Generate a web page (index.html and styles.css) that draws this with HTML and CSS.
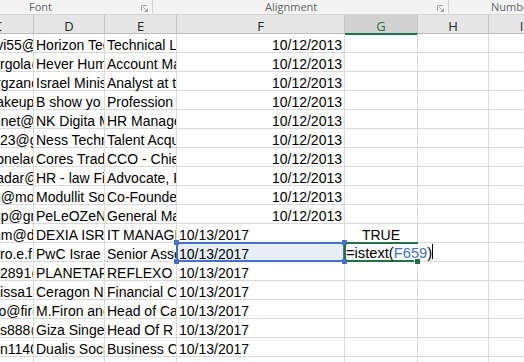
FILE: index.html
```html
<!DOCTYPE html>
<html>
<head>
<meta charset="utf-8">
<link rel="stylesheet" href="styles.css">
</head>
<body>
<div class="ribbon">
  <div class="group group-font">
    <span class="label">Font</span>
    <svg class="launcher" viewBox="0 0 7 7" width="7" height="7"><path d="M0.5 6V0.5H6" fill="none" stroke="#a6a6a6"/><path d="M2 2L5.5 5.5" stroke="#a6a6a6"/><path d="M7 3V7H3Z" fill="#a6a6a6"/></svg>
  </div>
  <div class="group group-align">
    <span class="label">Alignment</span>
    <svg class="launcher" viewBox="0 0 7 7" width="7" height="7"><path d="M0.5 6V0.5H6" fill="none" stroke="#a6a6a6"/><path d="M2 2L5.5 5.5" stroke="#a6a6a6"/><path d="M7 3V7H3Z" fill="#a6a6a6"/></svg>
  </div>
  <div class="group group-num">
    <span class="label">Number</span>
  </div>
</div>
<div class="sheet">
  <div class="hd">C</div><div class="hd">D</div><div class="hd">E</div><div class="hd">F</div><div class="hd sel">G</div><div class="hd">H</div><div class="hd">I</div>

  <div class="c">danavi55@gmail.com</div><div class="c">Horizon Technologies</div><div class="c">Technical Lead</div><div class="c r">10/12/2013</div><div class="c"></div><div class="c"></div><div class="c"></div>
  <div class="c">noamrgola@gmail.com</div><div class="c">Hever Human Resources</div><div class="c">Account Manager</div><div class="c r">10/12/2013</div><div class="c"></div><div class="c"></div><div class="c"></div>
  <div class="c">tomergzand@gmail.com</div><div class="c">Israel Ministry of Defense</div><div class="c">Analyst at the</div><div class="c r">10/12/2013</div><div class="c"></div><div class="c"></div><div class="c"></div>
  <div class="c">danaakeup@gmail.com</div><div class="c">B show yo Ltd</div><div class="c">Profession services</div><div class="c r">10/12/2013</div><div class="c"></div><div class="c"></div><div class="c"></div>
  <div class="c">ronennet@gmail.com</div><div class="c">NK Digita Media</div><div class="c">HR Manager</div><div class="c r">10/12/2013</div><div class="c"></div><div class="c"></div><div class="c"></div>
  <div class="c">amir123@gmail.com</div><div class="c">Ness Technologies</div><div class="c">Talent Acquisition</div><div class="c r">10/12/2013</div><div class="c"></div><div class="c"></div><div class="c"></div>
  <div class="c">danaonelac@gmail.com</div><div class="c">Cores Trading</div><div class="c">CCO - Chief</div><div class="c r">10/12/2013</div><div class="c"></div><div class="c"></div><div class="c"></div>
  <div class="c">danaadar@gmail.com</div><div class="c">HR - law Firm</div><div class="c">Advocate, Partner</div><div class="c r">10/12/2013</div><div class="c"></div><div class="c"></div><div class="c"></div>
  <div class="c">ronen@mor.co.il</div><div class="c">Modullit Software</div><div class="c">Co-Founder</div><div class="c r">10/12/2013</div><div class="c"></div><div class="c"></div><div class="c"></div>
  <div class="c">ronenp@gmail.com</div><div class="c">PeLeOZeN</div><div class="c">General Manager</div><div class="c r">10/12/2013</div><div class="c"></div><div class="c"></div><div class="c"></div>
  <div class="c">ronenm@dexia.com</div><div class="c">DEXIA ISRAEL</div><div class="c">IT MANAGER</div><div class="c">10/13/2017</div><div class="c m">TRUE</div><div class="c"></div><div class="c"></div>
  <div class="c">adamro.e.f@pwc.com</div><div class="c">PwC Israe</div><div class="c">Senior Associate</div>
  <div class="c open ref">10/13/2017<span class="ref-box"><i class="hdl tl"></i><i class="hdl tr"></i><i class="hdl bl"></i><i class="hdl br"></i></span></div>
  <div class="c open edit"><span class="edit-box"><i class="fill"></i></span><span class="editor">=istext(<span class="refname">F659</span>)<i class="caret"></i></span></div>
  <div class="c"></div><div class="c"></div>
  <div class="c">noam2891@gmail.com</div><div class="c">PLANETARIUM</div><div class="c">REFLEXO THERAPY</div><div class="c">10/13/2017</div><div class="c"></div><div class="c"></div><div class="c"></div>
  <div class="c">noamissa1@gmail.com</div><div class="c">Ceragon Networks</div><div class="c">Financial Controller</div><div class="c">10/13/2017</div><div class="c"></div><div class="c"></div><div class="c"></div>
  <div class="c">davido@firon.co.il</div><div class="c">M.Firon and Co</div><div class="c">Head of Career</div><div class="c">10/13/2017</div><div class="c"></div><div class="c"></div><div class="c"></div>
  <div class="c">noams888@gmail.com</div><div class="c">Giza Singer Even</div><div class="c">Head Of R Dept</div><div class="c">10/13/2017</div><div class="c"></div><div class="c"></div><div class="c"></div>
  <div class="c">noamn1140@gmail.com</div><div class="c">Dualis Social</div><div class="c">Business Consultant</div><div class="c">10/13/2017</div><div class="c"></div><div class="c"></div><div class="c"></div>
  <div class="c"></div><div class="c"></div><div class="c"></div><div class="c"></div><div class="c"></div><div class="c"></div><div class="c"></div>
</div>
</body>
</html>
```

FILE: styles.css
```css
html, body {
  margin: 0;
  padding: 0;
  background: #ffffff;
}
body {
  width: 524px;
  height: 362px;
  overflow: hidden;
  font-family: "Liberation Sans", Arial, sans-serif;
}

/* ribbon group labels */
.ribbon {
  display: flex;
  height: 15px;
  box-sizing: border-box;
  background: #f3f3f3;
  border-bottom: 1px solid #d6d6d6;
}
.group {
  display: flex;
  align-items: flex-end;
  height: 13px;
  box-sizing: border-box;
  border-right: 1px solid #d4d4d4;
}
.group-font { width: 153px; flex: none; padding-left: 29px; }
.group-align { width: 296px; flex: none; padding-left: 112px; }
.group-num { padding-left: 42px; border-right: 0; white-space: nowrap; }
.label {
  font-family: "Open Sans", "Noto Sans", sans-serif;
  font-size: 11px;
  line-height: 12px;
  color: #666666;
  white-space: nowrap;
}
.launcher {
  display: block;
  margin-left: auto;
  margin-right: 4px;
  align-self: flex-start;
  margin-top: 5px;
}

/* sheet grid */
.sheet {
  display: grid;
  grid-template-columns: 71px 71px 72px 168px 73px 71px 66px;
  grid-template-rows: 19px repeat(18, 19px);
  margin-left: -37px;
  width: 592px;
}
.hd {
  display: flex;
  justify-content: center;
  align-items: flex-end;
  box-sizing: border-box;
  background: #e6e6e6;
  border-right: 1px solid #c6c6c6;
  border-bottom: 1px solid #bdbdbd;
  font-family: "Open Sans", "Noto Sans", sans-serif;
  font-size: 13px;
  line-height: 14px;
  color: #262626;
}
.hd.sel {
  background: #d2d2d2;
  color: #217346;
  border-bottom-color: #217346;
  box-shadow: 0 1px 0 #217346;
}

.c {
  display: flex;
  align-items: flex-end;
  box-sizing: border-box;
  border-right: 1px solid #dadada;
  border-bottom: 1px solid #dadada;
  padding: 0 2px;
  overflow-x: clip;
  overflow-y: visible;
  white-space: nowrap;
  font-size: 14px;
  line-height: 13px;
  color: #000000;
}
.c.r { justify-content: flex-end; }
.c.m { justify-content: center; }
.c.open { overflow: visible; position: relative; }

/* referenced cell (blue range) */
.ref { background: #e8eef8; }
.ref-box {
  position: absolute;
  top: -1px;
  left: -1px;
  right: -1px;
  bottom: -1px;
  border: 2px solid #4472c4;
}
.hdl {
  position: absolute;
  width: 5px;
  height: 5px;
  background: #4472c4;
  z-index: 3;
}
.hdl.tl { top: -4px; left: -4px; }
.hdl.tr { top: -4px; right: -4px; }
.hdl.bl { bottom: -4px; left: -4px; }
.hdl.br { bottom: -4px; right: -4px; }

/* active cell in edit mode */
.edit-box {
  position: absolute;
  top: -1px;
  left: -1px;
  right: -1px;
  bottom: -1px;
  border: 2px solid #217346;
}
.fill {
  position: absolute;
  right: -4px;
  bottom: -4px;
  width: 5px;
  height: 5px;
  background: #217346;
  box-shadow: 0 0 0 1px #ffffff;
  z-index: 3;
}
.editor {
  position: absolute;
  left: 1px;
  top: 1px;
  bottom: 1px;
  display: flex;
  align-items: flex-end;
  padding-right: 2px;
  background: #ffffff;
  white-space: nowrap;
  font-size: 14.7px;
  z-index: 2;
}
.refname { color: #4472c4; }
.caret {
  display: block;
  width: 1px;
  height: 15px;
  margin-left: 0;
  margin-bottom: 1px;
  align-self: flex-end;
  background: #000000;
}
```
